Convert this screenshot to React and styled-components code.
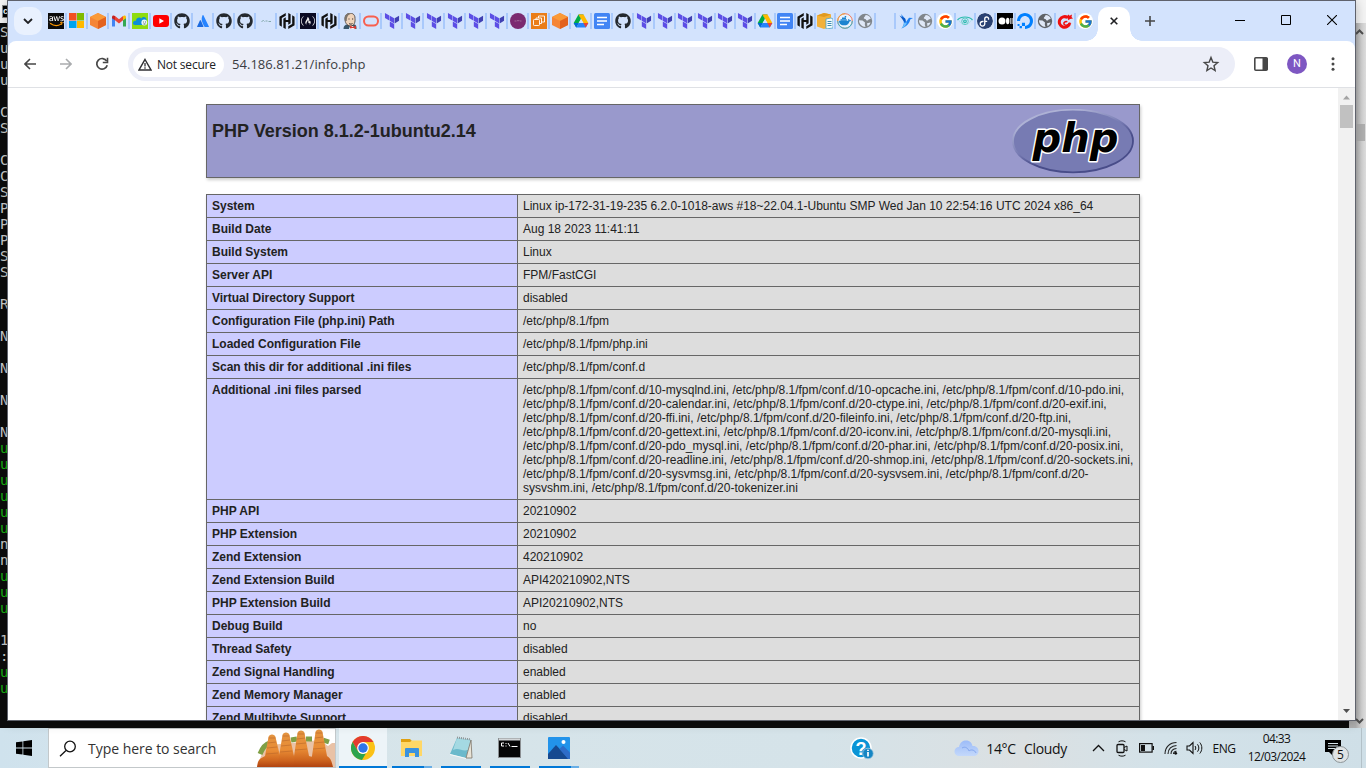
import React from "react";
import styled, { createGlobalStyle, css } from "styled-components";
import { FaGithub, FaAws } from "react-icons/fa";
import { FcGoogle } from "react-icons/fc";
import { SiHashicorp, SiFedora, SiDigitalocean, SiFreecodecamp } from "react-icons/si";

const Global = createGlobalStyle`
  * { box-sizing: border-box; }
  body { margin: 0; overflow: hidden; }
`;

const ui = `"Open Sans", "Noto Sans", sans-serif`;

const Desktop = styled.div`
  position: relative;
  width: 1366px;
  height: 768px;
  overflow: hidden;
  display: flex;
  flex-direction: column;
  font-family: ${ui};
`;

/* ---------- terminal behind the browser ---------- */
const Terminal = styled.div`
  height: 728px;
  display: flex;
  flex-direction: column;
  background: #0c0c0c;
`;
const TerminalTitle = styled.div`
  height: 23px;
  flex: none;
  background: #f4f4f4;
  display: flex;
  align-items: center;
`;
const TerminalIcon = styled.span`
  width: 10px;
  height: 13px;
  margin-left: 2px;
  border: 1px solid #888;
  background: #000;
  color: #fff;
  font: bold 9px/11px "Liberation Sans", sans-serif;
`;
const TerminalBody = styled.div`
  flex: 1;
  display: flex;
  justify-content: space-between;
`;
const Lines = styled.div`
  padding-top: 1px;
  font: 14px/16px "DejaVu Sans Mono", monospace;
`;
const Line = styled.div`
  height: 16px;
  color: ${(p) => (p.$green ? "#16b610" : "#cccccc")};
`;
const TerminalScroll = styled.div`
  width: 17px;
  background: linear-gradient(90deg, #b0b0b0 0 40%, #d2d2d2 75%, #dedede);
  display: flex;
  flex-direction: column;
  justify-content: space-between;
  padding: 5px 0 3px;
  align-items: flex-end;
`;
const TerminalThumb = styled.div`
  width: 10px;
  height: 17px;
  margin: 88px 1px auto 0;
  background: #b0b0b0;
`;

/* ---------- browser window ---------- */
const Window = styled.div`
  position: absolute;
  left: 7px;
  top: 0;
  width: 1349px;
  height: 721px;
  border: 1px solid #5f626c;
  display: flex;
  flex-direction: column;
  background: #fff;
  box-shadow: 0 2px 10px rgba(0, 0, 0, 0.25);
`;
const TabStrip = styled.div`
  height: 40px;
  flex: none;
  display: flex;
  background: #d3e3fd;
  padding-left: 6px;
`;
const TabSearch = styled.div`
  width: 28px;
  height: 28px;
  margin: 6px 6px 0 0;
  border-radius: 10px;
  background: #e9f1fe;
  display: grid;
  place-items: center;
`;
const Tab = styled.div`
  width: ${(p) => p.$w}px;
  height: 16px;
  margin-top: 12px;
  display: flex;
  justify-content: space-between;
  flex: none;
  &::after {
    content: "";
    width: 2px;
    margin-right: ${(p) => (p.$w === 21 ? 2 : 1)}px;
    background: ${(p) => (p.$plain ? "transparent" : "#a9c9fb")};
  }
  svg { display: block; }
`;
const Tile = styled.span`
  width: 16px;
  height: 16px;
  display: grid;
  place-items: center;
  background: ${(p) => p.$bg || "transparent"};
  border-radius: ${(p) => p.$r || 0}px;
  color: ${(p) => p.$c || "#24292f"};
  overflow: hidden;
`;
const ActiveTab = styled.div`
  position: relative;
  width: 32px;
  height: 34px;
  margin: 6px 0 0 1px;
  border-radius: 10px 10px 0 0;
  background: #fff;
  display: grid;
  place-items: center;
  padding-bottom: 6px;
  &::before, &::after {
    content: "";
    position: absolute;
    bottom: 0;
    width: 12px;
    height: 12px;
  }
  &::before { left: -12px; background: radial-gradient(circle at 0 0, transparent 11.5px, #fff 12px); }
  &::after { right: -12px; background: radial-gradient(circle at 100% 0, transparent 11.5px, #fff 12px); }
`;
const NewTab = styled.div`
  width: 40px;
  display: grid;
  place-items: center;
`;
const WindowButtons = styled.div`
  margin-left: auto;
  display: flex;
  height: 38px;
`;
const WindowButton = styled.div`
  width: 46px;
  display: grid;
  place-items: center;
`;
const ToolbarBack = styled.div`
  background: #d3e3fd;
  flex: none;
`;
const Toolbar = styled.div`
  height: 47px;
  border-bottom: 1px solid #dfe1e5;
  border-radius: 8px 8px 0 0;
  background: #fff;
  display: flex;
  align-items: center;
  padding-left: 4px;
`;
const NavButton = styled.div`
  width: 36px;
  display: grid;
  place-items: center;
`;
const Omnibox = styled.div`
  width: 1107px;
  height: 34px;
  margin: 0 8px;
  padding: 0 15px 0 5px;
  border-radius: 17px;
  background: #eceef8;
  display: flex;
  align-items: center;
`;
const SecurityChip = styled.div`
  width: 91px;
  height: 25px;
  border-radius: 13px;
  background: #fff;
  padding-left: 5px;
  display: flex;
  align-items: center;
  gap: 5px;
  color: #202124;
  font-size: 12px;
  letter-spacing: -0.2px;
  white-space: nowrap;
`;
const Url = styled.div`
  margin: 0 auto 0 8px;
  font-size: 13px;
  letter-spacing: 0.04px;
  color: #3a3c42;
`;
const Avatar = styled.div`
  width: 20px;
  height: 20px;
  border-radius: 50%;
  background: #7e57c2;
  color: #fff;
  font: 11px/20px Roboto, sans-serif;
  text-align: center;
`;
const Viewport = styled.div`
  flex: 1;
  min-height: 0;
  display: flex;
  overflow: hidden;
`;
const Page = styled.div`
  width: 1330px;
  padding-top: 16px;
  font-family: "Liberation Sans", Arial, sans-serif;
  color: #222;
`;
const Scrollbar = styled.div`
  width: 17px;
  background: #f1f1f1;
  display: flex;
  flex-direction: column;
  align-items: center;
  padding: 7px 0;
`;
const Thumb = styled.div`
  width: 13px;
  height: 23px;
  margin: 5px 0 auto;
  background: #c1c1c1;
`;

/* ---------- phpinfo document ---------- */
const Banner = styled.div`
  width: 934px;
  height: 74px;
  margin: 0 auto 16px;
  padding: 4px 5px;
  border: 1px solid #666;
  background: #9999cc;
  box-shadow: 1px 2px 3px #ccc;
  display: flex;
  justify-content: space-between;
`;
const Heading = styled.h1`
  margin: 12px 0 0;
  font-size: 18px;
  line-height: 21px;
  font-weight: bold;
`;
const Info = styled.table`
  width: 934px;
  margin: 0 auto;
  border-collapse: collapse;
  table-layout: fixed;
  box-shadow: 1px 2px 3px #ccc;
  font-size: 12px;
  line-height: 14px;
`;
const cell = css`
  border: 1px solid #666;
  padding: 4px 5px;
  vertical-align: top;
  white-space: nowrap;
`;
const Key = styled.td`
  ${cell}
  width: 311px;
  background: #ccccff;
  font-weight: bold;
`;
const Value = styled.td`
  ${cell}
  background: #dddddd;
`;

/* ---------- taskbar ---------- */
const Taskbar = styled.div`
  height: 40px;
  display: flex;
  background: linear-gradient(90deg, #cfe2ed, #d7e5ea 15%, #d5e3e9 60%, #dbe0e2 75%, #d3e2e9 85%, #cfdfe7);
  color: #111;
`;
const Start = styled.div`
  width: 48px;
  display: grid;
  place-items: center;
`;
const Search = styled.div`
  width: 288px;
  height: 40px;
  border: 1px solid #c3c8ca;
  background: #fff;
  display: flex;
  align-items: center;
  padding-left: 10px;
  color: #333;
  font-size: 14px;
  & > svg:last-child { margin-left: auto; }
`;
const SearchText = styled.span`
  margin-left: 11px;
  letter-spacing: -0.03px;
  white-space: nowrap;
`;
const Apps = styled.div`
  display: flex;
  gap: 9px;
  margin-left: 3px;
`;
const TaskButton = styled.div`
  width: ${(p) => (p.$active ? 48 : 40)}px;
  margin-right: ${(p) => (p.$active ? -4 : 0)}px;
  background: ${(p) => (p.$active ? "#edf4f8" : "transparent")};
  display: flex;
  flex-direction: column;
  align-items: center;
  justify-content: space-between;
`;
const AppIcon = styled.div`
  height: 38px;
  padding-top: 1px;
  display: grid;
  place-items: center;
`;
const Running = styled.div`
  align-self: stretch;
  height: 2px;
  background: ${(p) => (p.$multi ? "linear-gradient(90deg, #0078d7 80%, #68aee6 80%)" : "#0078d7")};
`;
const Tray = styled.div`
  margin-left: auto;
  padding-right: 4px;
  display: flex;
  align-items: center;
`;
const TrayItem = styled.div`
  width: ${(p) => p.$w}px;
  margin-right: ${(p) => p.$after || 0}px;
  display: flex;
  justify-content: center;
  font-size: ${(p) => p.$size || 13}px;
  letter-spacing: ${(p) => p.$s || 0}px;
  white-space: nowrap;
`;
const Clock = styled.div`
  width: 79px;
  font-size: 12px;
  line-height: 18px;
  letter-spacing: -0.6px;
  text-align: center;
`;
const Notifications = styled.div`
  position: relative;
  width: 43px;
  height: 40px;
  margin-left: 3px;
  padding: 12px 0 0 6px;
  border-right: 1px solid #b3c1c8;
`;
const Badge = styled.div`
  position: absolute;
  left: 13px;
  top: 18px;
  width: 17px;
  height: 17px;
  border: 1px solid #8d9598;
  border-radius: 50%;
  background: #dfe3e4;
  font-size: 12px;
  line-height: 15px;
  text-align: center;
`;

/* ---------- favicons ---------- */
const Svg = ({ s = 16, v = 16, children, ...rest }) => (
  <svg width={s} height={s} viewBox={`0 0 ${v} ${v}`} fill="none" {...rest}>{children}</svg>
);
const Aws = () => (
  <Tile $bg="#0b0b0b" $c="#fff">
    <Svg>
      <FaAws x=".5" y="0" width="15" height="15" color="#fff" />
      <path d="M0 10.800c3.600 3 11 3 16 0" stroke="#0b0b0b" strokeWidth="4.200" />
      <path d="M2 10.300c3.600 2.600 8 2.700 11 .8M12 9.800l2-.2-.5 2" stroke="#f90" strokeWidth="1.100" />
    </Svg>
  </Tile>
);
const Microsoft = () => (
  <Svg><path d="M0 0h7.500v7.500H0z" fill="#f25022" /><path d="M8 0h7v7.500H8z" fill="#7fba00" /><path d="M0 8h7.500v7H0z" fill="#00a4ef" /><path d="M8 8h7v7H8z" fill="#ffb900" /></Svg>
);
const Cube = () => (
  <Svg><path d="M8 0l8 4v8l-8 4-8-4V4z" fill="#f58536" /><path d="M8 0l8 4-8 4-8-4z" fill="#fa9a38" /><path d="M8 8l8-4v8l-8 4z" fill="#e3621e" /></Svg>
);
const Gmail = () => (
  <Svg>
    <path d="M1 4v9.500h3V7z" fill="#4285f4" /><path d="M15 4v9.500h-3V7z" fill="#34a853" />
    <path d="M4 3l4 3.300L12 3v4.200l-4 3.200-4-3.200z" fill="#ea4335" />
    <path d="M12 3c1.500-1 3-.5 3 1v1.200l-3 2z" fill="#fbbc04" /><path d="M4 3C2.500 2 1 2.500 1 4v1.200l3 2z" fill="#c5221f" />
  </Svg>
);
const CloudFace = () => (
  <Svg>
    <path d="M0 0h16v16H0z" fill="#8edc10" />
    <path d="M1 10c0-2 2-2.500 3-2.300 0-3 4-4 5.500-2.200C11 3 14.500 4 14.500 7c1 4-1 5-3 5H3c-1.500 0-2-1-2-2z" fill="#0c8ed8" />
    <circle cx="12.300" cy="9.500" r="2.900" fill="#e9f6f8" /><path d="M11 9h.800M13 9h1M11.500 11h2" stroke="#39474c" strokeWidth=".8" />
  </Svg>
);
const YouTube = () => (
  <Svg><rect y="2" width="16" height="12" rx="3" fill="red" /><path d="M6.300 5.300v5.400L11 8z" fill="#fff" /></Svg>
);
const GitHub = () => <FaGithub size={16} color="#24292f" />;
const Atlassian = () => (
  <Svg><path d="M5 7.300c.3-.3.700-.2.900.2l2.600 6c.1.300 0 .5-.4.500H2.500c-.4 0-.5-.3-.4-.6z" fill="#1c6be0" /><path d="M7.600 2.300c.2-.4.600-.4.800 0l5.500 11.100c.1.300 0 .6-.4.600H10c-.4 0-.6-.1-.7-.4-1.300-3-4-6.500-1.700-11.300z" fill="#2684ff" /></Svg>
);
const Faint = () => (
  <Svg><path d="M3.500 8.500l2-1 1 1M7.500 8h2M10.500 8.500H13" stroke="#83a9ac" /></Svg>
);
const Hashi = () => <SiHashicorp size={16} color="#111" />;
const FreeCode = () => <Tile $bg="#0a0a23"><SiFreecodecamp size={14} color="#eee" /></Tile>;
const Jenkins = () => (
  <Svg>
    <path d="M1.500 16c0-3 1.500-4.500 4-4.500h6c3 0 3 2 3 4.500z" fill="#39576b" />
    <path d="M3 6c0-8 10.500-7.500 10-.5.4 3-.5 7.500-4.500 7.500S3 9 3 6z" fill="#efd4bb" stroke="#3c3330" strokeWidth=".8" />
    <path d="M3 8C1 1.500 6-.5 8.500 1 5.500 2 5 4 4.700 8z" fill="#7c756c" />
    <path d="M6.500 6h1M10 6h1.200M7 10.500c1 1 3 .6 3.500 0" stroke="#3c3330" />
    <path d="M7 16l1-3h3l2 3z" fill="#fff" /><path d="M8 12.500l3 1.500 3-1.500V16l-3-1-3 .5z" fill="#d33833" />
  </Svg>
);
const Oracle = () => (
  <Svg><rect x="1" y="3.500" width="14" height="9" rx="4.500" stroke="#f8604f" strokeWidth="2" /></Svg>
);
const Terraform = () => (
  <Svg v={24}>
    <path d="M1.440 0v7.575l6.561 3.790V3.787zM8.720 4.230v7.575l6.561 3.787V8.018zM8.720 12.635v7.575L15.280 24v-7.578z" fill="#5c4ee5" />
    <path d="M22.560 4.227l-6.561 3.791v7.574l6.560-3.787z" fill="#4040b2" />
  </Svg>
);
const Plum = () => (
  <Svg><circle cx="8" cy="8" r="8" fill="#7b2a70" /><path d="M4.500 8h2M7 7.700h2.500M10 8h1.500" stroke="#a777a0" strokeWidth=".8" /></Svg>
);
const Ec2 = () => (
  <Svg><path d="M0 0h16v16H0z" fill="#ea7d18" /><rect x="2.500" y="6.500" width="6" height="6" rx=".8" stroke="#fff" strokeWidth=".9" /><path d="M5 6.500V5h5.500v5.500h-2M7.500 5V3h6v6h-3" stroke="#fff" strokeWidth=".9" /></Svg>
);
const Drive = () => (
  <Svg>
    <path d="M5.500 1.500h5L8 6z" fill="#188038" /><path d="M5.500 1.500L8 6 3.200 14.500.7 10z" fill="#00ac47" />
    <path d="M10.500 1.500L15.300 10h-5L5.500 1.500z" fill="#ffba00" /><path d="M.700 10l2.500 4.500L5.700 10z" fill="#0066da" />
    <path d="M3.200 14.500L5.700 10h9.600l-2.500 4.500z" fill="#2684fc" /><path d="M10.300 10h5l-2.500 4.500z" fill="#ea4335" />
    <path d="M8 6l2.400 4H5.600z" fill="#d3e3fd" />
  </Svg>
);
const Docs = () => (
  <Svg><rect width="16" height="16" rx="1.500" fill="#4285f4" /><path d="M3 4.500h10M3 8h10M3 11.500h7" stroke="#fff" strokeWidth="1.700" /></Svg>
);
const Box = () => (
  <Svg><path d="M0 2.500L7 0l7 1.500V13l-7 3-7-2.500z" fill="#f2b13a" /><path d="M0 2.500L7 4l7-2.500L7 0z" fill="#e09a20" /><path d="M9 6l5-1 2 1v9l-7 1z" fill="#f3fafc" stroke="#4aa3c6" strokeWidth=".8" /><path d="M10.500 8.500h4M10.500 10.500h4M10.500 12.500h4" stroke="#3d8cb4" /></Svg>
);
const Docker = () => (
  <Svg>
    <circle cx="8" cy="8" r="7.300" fill="#e8f3fd" stroke="#f0795c" />
    <path d="M8 .700a7.300 7.300 0 0 0-7.300 7.300" stroke="#eba13e" /><path d="M.700 8A7.300 7.300 0 0 0 8 15.300 7.300 7.300 0 0 0 15.300 8" stroke="#38b6c9" />
    <path d="M2 7.800h9.200c.3-.8.200-1.300-.1-1.800.9-.2 1.500.5 1.600 1.200.6-.1 1 0 1.500.300-.4.700-1 .9-1.700.9C11.700 11 10 12.300 7 12.300c-3.500 0-5-2-5-4.500z" fill="#1d84d0" />
    <path d="M3.500 7h6.300M5 5.300h4M7.700 3.600h1.500" stroke="#1d84d0" strokeWidth="1.400" />
  </Svg>
);
const Globe = ({ c = "#80868b" }) => (
  <Svg><circle cx="8" cy="8" r="7.200" fill={c} /><path d="M2 7.200l3.500.2 2.500 2-.2 2 .7 2.500c-3.500 0-6.500-2.900-6.500-6.700z" fill="#dfe8f7" /><path d="M8.500 2c2.500 0 4.500 1.500 5.300 3.500-.8 1.200-2 .5-2.600 1.500-.8 1.300-2.200.2-2.400-.8l-2-.700C6.500 3.700 8.700 3.700 8.500 2z" fill="#dfe8f7" /><path d="M10 10.200l3.500-.7c-.4 1.700-1.500 3-3 3.800z" fill="#dfe8f7" /></Svg>
);
const Bird = () => (
  <Svg><path d="M4 1l4.500 5L9 9l3-4.200 4 .2-2.800 1.500C12.500 10.500 9 14 4.500 15.500 6.500 13 7 11 6.800 9z" fill="#2183f3" /><path d="M2.500 2.500l5 6.500 1.200-.5L8 5.500z" fill="#0b57c2" /><path d="M4.500 15.500C6 13.500 7 12 7 10l3-.5C9 12.500 7 14.500 4.500 15.500z" fill="#6cc0fb" /></Svg>
);
const GoogleIcon = () => <Tile $bg="#fff" $r={8}><FcGoogle size={15} /></Tile>;
const Eye = () => (
  <Svg><path d="M.500 7C4 3 12 3 15.500 7" stroke="#2bbbae" strokeWidth="1.200" /><circle cx="8" cy="8.300" r="3.300" stroke="#5fcac3" /><circle cx="8" cy="8.300" r="1.300" stroke="#2bbbae" strokeWidth="1.200" /><path d="M2 7.500c1.200 2 2 3 4 4M14 7.500c-1.200 2-2 3-4 4" stroke="#a0dfe0" strokeWidth=".700" /></Svg>
);
const Fedora = () => <Tile $bg="#fff" $r={8}><SiFedora size={16} color="#294172" /></Tile>;
const Medium = () => (
  <Tile $bg="#000"><Svg><circle cx="5" cy="8" r="3.500" fill="#fff" /><ellipse cx="10.700" cy="8" rx="1.700" ry="3.300" fill="#fff" /><path d="M13.700 5v6M15.200 5v6" stroke="#fff" strokeWidth=".8" /></Svg></Tile>
);
const DigitalOcean = () => <SiDigitalocean size={16} color="#0080ff" />;
const RedSwirl = () => (
  <Svg>
    <path d="M10.500 4.500A5.300 5.300 0 1 0 12.800 10" stroke="#ee1010" strokeWidth="3" />
    <path d="M12.800 9.500c-.2 2.500-4.800 3.700-5.800 1.700-.7-1.700 1.300-3.200 3.300-2.400" stroke="#ee1010" strokeWidth="1.500" />
    <path d="M9.500 3.500l2.200-2 .8 1.300L15 1.500l-.5 2.500 1.500 1.500-3 .5-1.500 1.200z" fill="#ee1010" />
  </Svg>
);
const DarkGlobe = () => <Globe c="#5f6368" />;
const Blank = () => <Tile />;

const tabs = [
  Aws, Microsoft, Cube, Gmail, CloudFace, YouTube, GitHub, Atlassian, GitHub, GitHub, Faint, Hashi,
  FreeCode, Hashi, Jenkins, Oracle, Terraform, Terraform, Terraform, Terraform, Terraform, Terraform,
  Plum, Ec2, Cube, Drive, Docs, GitHub, Terraform, Terraform, Terraform, Terraform, Terraform, Terraform,
  Drive, Docs, Hashi, Box, Docker, Globe, Blank, Bird, Globe, GoogleIcon, Eye, Fedora, Medium,
  DigitalOcean, DarkGlobe, RedSwirl, GoogleIcon,
];

/* one character per console line; "g" is a green prompt */
const terminalText = "Suuu CS CCSPPPSS R N N N NggggggnngggX1:gg";

const ini = [
  "/etc/php/8.1/fpm/conf.d/10-mysqlnd.ini, /etc/php/8.1/fpm/conf.d/10-opcache.ini, /etc/php/8.1/fpm/conf.d/10-pdo.ini,",
  "/etc/php/8.1/fpm/conf.d/20-calendar.ini, /etc/php/8.1/fpm/conf.d/20-ctype.ini, /etc/php/8.1/fpm/conf.d/20-exif.ini,",
  "/etc/php/8.1/fpm/conf.d/20-ffi.ini, /etc/php/8.1/fpm/conf.d/20-fileinfo.ini, /etc/php/8.1/fpm/conf.d/20-ftp.ini,",
  "/etc/php/8.1/fpm/conf.d/20-gettext.ini, /etc/php/8.1/fpm/conf.d/20-iconv.ini, /etc/php/8.1/fpm/conf.d/20-mysqli.ini,",
  "/etc/php/8.1/fpm/conf.d/20-pdo_mysql.ini, /etc/php/8.1/fpm/conf.d/20-phar.ini, /etc/php/8.1/fpm/conf.d/20-posix.ini,",
  "/etc/php/8.1/fpm/conf.d/20-readline.ini, /etc/php/8.1/fpm/conf.d/20-shmop.ini, /etc/php/8.1/fpm/conf.d/20-sockets.ini,",
  "/etc/php/8.1/fpm/conf.d/20-sysvmsg.ini, /etc/php/8.1/fpm/conf.d/20-sysvsem.ini, /etc/php/8.1/fpm/conf.d/20-",
  "sysvshm.ini, /etc/php/8.1/fpm/conf.d/20-tokenizer.ini",
];
const rows = [
  ["System", ["Linux ip-172-31-19-235 6.2.0-1018-aws #18~22.04.1-Ubuntu SMP Wed Jan 10 22:54:16 UTC 2024 x86_64"]],
  ["Build Date", ["Aug 18 2023 11:41:11"]],
  ["Build System", ["Linux"]],
  ["Server API", ["FPM/FastCGI"]],
  ["Virtual Directory Support", ["disabled"]],
  ["Configuration File (php.ini) Path", ["/etc/php/8.1/fpm"]],
  ["Loaded Configuration File", ["/etc/php/8.1/fpm/php.ini"]],
  ["Scan this dir for additional .ini files", ["/etc/php/8.1/fpm/conf.d"]],
  ["Additional .ini files parsed", ini],
  ["PHP API", ["20210902"]],
  ["PHP Extension", ["20210902"]],
  ["Zend Extension", ["420210902"]],
  ["Zend Extension Build", ["API420210902,NTS"]],
  ["PHP Extension Build", ["API20210902,NTS"]],
  ["Debug Build", ["no"]],
  ["Thread Safety", ["disabled"]],
  ["Zend Signal Handling", ["enabled"]],
  ["Zend Memory Manager", ["enabled"]],
  ["Zend Multibyte Support", ["disabled"]],
];

const PhpLogo = () => (
  <svg width="122" height="65" viewBox="0 0 122 65">
    <defs>
      <linearGradient id="rim" x1=".2" y1="0" x2=".8" y2="1">
        <stop offset=".15" stopColor="#aeb2d5" /><stop offset=".45" stopColor="#777bb3" /><stop offset=".65" stopColor="#484c89" />
      </linearGradient>
    </defs>
    <ellipse cx="61" cy="32" rx="60" ry="31.300" fill="#777bb3" stroke="url(#rim)" strokeWidth="1.800" />
    <text x="20.500" y="43" textLength="86" lengthAdjust="spacingAndGlyphs" fontFamily="DejaVu Sans" fontWeight="bold" fontStyle="italic" fontSize="41" fill="#000" stroke="#fff" strokeWidth="3" paintOrder="stroke" strokeLinejoin="round">php</text>
  </svg>
);

/* ---------- taskbar drawings ---------- */
const fingers = [
  { x: 17, y: 5, l: 2, r: 30 },
  { x: 31, y: 3, l: 22, r: 48 },
  { x: 46, y: 1, l: 38, r: 66 },
  { x: 64, y: 0, l: 54, r: 78 },
];
const Spires = () => (
  <svg width="80" height="38" viewBox="0 0 80 38">
    <defs>
      <linearGradient id="finger" x1="0" y1="0" x2="0" y2="1">
        <stop stopColor="#e39441" /><stop offset=".5" stopColor="#e98c35" /><stop offset=".8" stopColor="#cf661f" /><stop offset="1" stopColor="#b04310" />
      </linearGradient>
    </defs>
    <path d="M3 38c2-10 5-18 12-22l50-5 8 6 4-3h3v24z" fill="#e9c2a6" />
    <path d="M5 25c2-5 6-10 10-11M36 11l6-1M51 10l6 0M68 11l6 2" stroke="#7f9f45" strokeWidth="5" fill="none" />
    {fingers.map(({ x, y, l, r }) => (
      <g key={x}>
        <path
          d={`M${l} 38C${l + 1} 31 ${l + 2} 30 ${x - 7} 27L${x - 3.500} ${y + 3}C${x - 3} ${y - 0.500} ${x + 3} ${y - 0.500} ${x + 3.500} ${y + 3}L${x + 8} 27C${r - 2} 29 ${r - 1} 34 ${r} 38z`}
          fill="url(#finger)"
        />
        <path d={`M${x - 3.500} ${y + 4}h7M${x - 4} ${y + 9}l8-1M${x - 5} ${y + 14}l10-1M${x - 6} ${y + 20}l12-1`} stroke="#b9662a" strokeWidth=".6" fill="none" />
      </g>
    ))}
  </svg>
);
const Chrome = () => (
  <Svg s={24} v={24}>
    <circle cx="12" cy="12" r="12" fill="#fbc116" />
    <path d="M1.600 6A12 12 0 0 1 22.400 6H12l-5.200 9z" fill="#e33b2e" />
    <path d="M1.600 6l5.200 9a6 6 0 0 0 8.200 2.200L11 24A12 12 0 0 1 1.600 6z" fill="#2da44e" />
    <circle cx="12" cy="12" r="5.900" fill="#fff" /><circle cx="12" cy="12" r="4.700" fill="#2f75e8" />
  </Svg>
);
const Explorer = () => (
  <Svg s={22} v={22}><path d="M0 2h9l2 2v3H0z" fill="#e0a010" /><path d="M0 5h9l2-1.500h10V19H0z" fill="#ffd766" /><path d="M4 20v-8q0-1 1-1h12q1 0 1 1v8h-4v-4H8v4z" fill="#3b92de" /></Svg>
);
const Notepad = () => (
  <Svg s={24} v={24}><path d="M8 2l14 2-5 18L1 18z" fill="#6bb9cb" /><path d="M8 2l14 2-3 10c-6 2-9-3-15 0z" fill="#a4d9e2" /><path d="M22 4l1 18-6 0z" fill="#e9e4d7" stroke="#7c7467" strokeWidth=".8" /><path d="M8 1.500l14 2" stroke="#8d9496" strokeWidth="2" strokeDasharray="1 1" /><path d="M1 18.500l16 4" stroke="#f5f8f8" /></Svg>
);
const Cmd = () => (
  <Svg s={24} v={24}><rect x=".500" y="2.500" width="22" height="19" fill="#060606" stroke="#8b8f92" /><path d="M1 3.500h21" stroke="#d3d6d8" strokeWidth="2" /><path d="M6 7H3.500v3H6M8 7v1M8 9.500v1M10 7l2 3.500M13.500 10.500h6" stroke="#fff" /></Svg>
);
const Photos = () => (
  <Svg s={22} v={22}><rect width="22" height="22" rx="1" fill="#2293ea" /><path d="M0 17L8 8l13 14H0z" fill="#164990" /><path d="M11.500 12L15 8.500l7 7V22H20z" fill="#2e6cc8" /><circle cx="15.500" cy="5" r="2" fill="#fff" /></Svg>
);
const Help = () => (
  <svg width="24" height="24" viewBox="0 0 24 24">
    <circle cx="11" cy="12" r="10" fill="#0a94d6" stroke="#fff" strokeWidth="1.500" />
    <text x="5.500" y="18.500" fontFamily="Liberation Sans" fontWeight="bold" fontSize="18" fill="#fff">?</text>
    <circle cx="18" cy="17.500" r="5.300" fill="#1686c4" stroke="#a9cde0" strokeWidth=".8" /><path d="M18 16v4.500M18 13.800v1.300" stroke="#fff" strokeWidth="1.700" />
  </svg>
);
const Cloud = () => (
  <svg width="25" height="17" viewBox="0 0 25 17">
    <defs><linearGradient id="cl" x1="0" y1="0" x2="0" y2="1"><stop stopColor="#9dbcf8" /><stop offset="1" stopColor="#c3d8fb" /></linearGradient></defs>
    <path d="M5 16a4.500 4.500 0 0 1 0-9C6 2 9 .500 12 .500c4 0 6 2.500 6.500 5.500C22 5.500 24.500 8 24.500 11s-2 5-5 5z" fill="url(#cl)" />
    <path d="M8 8c3-2 6 0 7 3 2-2 6-1 7 2" stroke="#86a9f0" fill="none" />
  </svg>
);

export default function App() {
  return (
    <Desktop>
      <Global />
      <Terminal>
        <TerminalTitle><TerminalIcon>c</TerminalIcon></TerminalTitle>
        <TerminalBody>
          <Lines>
            {[...terminalText].map((ch, i) => (
              <Line key={i} $green={ch === "g"}>{ch === "g" ? "u" : ch === "X" ? " " : ch}</Line>
            ))}
          </Lines>
          <TerminalScroll>
            <svg width="11" height="8"><path d="M1 6l3.500-3.500L8 6" stroke="#505050" strokeWidth="2" fill="none" /></svg>
            <TerminalThumb />
            <svg width="11" height="8"><path d="M1 2l3.500 3.500L8 2" stroke="#505050" strokeWidth="2" fill="none" /></svg>
          </TerminalScroll>
        </TerminalBody>
      </Terminal>

      <Window>
        <TabStrip>
          <TabSearch><svg width="10" height="6"><path d="M1 1l4 4 4-4" stroke="#202124" strokeWidth="1.800" fill="none" /></svg></TabSearch>
          {tabs.map((Icon, i) => (
            <Tab key={i} $w={i < 29 ? 21 : 20} $plain={i === tabs.length - 1}><Icon /></Tab>
          ))}
          <ActiveTab><svg width="8" height="8"><path d="M.700.700l6.600 6.600M7.300.700L.700 7.300" stroke="#202124" strokeWidth="1.600" /></svg></ActiveTab>
          <NewTab><svg width="12" height="12"><path d="M6 1v10M1 6h10" stroke="#474747" strokeWidth="1.600" /></svg></NewTab>
          <WindowButtons>
            <WindowButton><svg width="10" height="10"><path d="M0 5.500h10" stroke="#000" /></svg></WindowButton>
            <WindowButton><svg width="10" height="10"><path d="M.500.500h9v9h-9z" stroke="#000" fill="none" /></svg></WindowButton>
            <WindowButton><svg width="10" height="10"><path d="M0 0l10 10M10 0L0 10" stroke="#000" strokeWidth="1.100" /></svg></WindowButton>
          </WindowButtons>
        </TabStrip>
        <ToolbarBack>
          <Toolbar>
            <NavButton><svg width="12" height="12"><path d="M12 6H1.500M6 1L1 6l5 5" stroke="#474747" strokeWidth="1.600" fill="none" /></svg></NavButton>
            <NavButton><svg width="12" height="12"><path d="M0 6h10.500M6 1l5 5-5 5" stroke="#aaacae" strokeWidth="1.600" fill="none" /></svg></NavButton>
            <NavButton><svg width="14" height="14"><path d="M11.700 4.200A5.300 5.300 0 1 0 12.200 8.200" stroke="#474747" strokeWidth="1.700" fill="none" /><path d="M12.500.800v4.700H7.800" stroke="#474747" strokeWidth="1.600" fill="none" /></svg></NavButton>
            <Omnibox>
              <SecurityChip>
                <svg width="14" height="13"><path d="M7 1.500L13 12H1z" stroke="#303134" strokeWidth="1.500" fill="none" /><path d="M7 5v3.500M7 9.300v1.400" stroke="#303134" strokeWidth="1.300" /></svg>
                Not secure
              </SecurityChip>
              <Url>54.186.81.21/info.php</Url>
              <svg width="18" height="18" viewBox="0 0 18 18"><path d="M9 2.500l1.800 4.600 4.900.4-3.700 3.200 1.100 4.800L9 13l-4.100 2.500L6 10.700 2.300 7.500l4.900-.4z" stroke="#474747" strokeWidth="1.400" fill="none" /></svg>
            </Omnibox>
            <NavButton><svg width="14" height="14"><rect x=".800" y=".800" width="12.400" height="12.400" rx="1" stroke="#474747" strokeWidth="1.600" fill="none" /><path d="M8.500 1h5v12h-5z" fill="#474747" /></svg></NavButton>
            <NavButton><Avatar>N</Avatar></NavButton>
            <NavButton><svg width="4" height="14"><circle cx="2" cy="1.700" r="1.500" fill="#474747" /><circle cx="2" cy="7" r="1.500" fill="#474747" /><circle cx="2" cy="12.300" r="1.500" fill="#474747" /></svg></NavButton>
          </Toolbar>
        </ToolbarBack>
        <Viewport>
          <Page>
            <Banner>
              <Heading>PHP Version 8.1.2-1ubuntu2.14</Heading>
              <PhpLogo />
            </Banner>
            <Info>
              <tbody>
                {rows.map(([k, v]) => (
                  <tr key={k}>
                    <Key>{k}</Key>
                    <Value>{v.map((t) => <div key={t}>{t}</div>)}</Value>
                  </tr>
                ))}
              </tbody>
            </Info>
          </Page>
          <Scrollbar>
            <svg width="7" height="5"><path d="M0 4.500L3.500.500 7 4.500z" fill="#a3a3a3" /></svg>
            <Thumb />
            <svg width="7" height="4"><path d="M0 0h7L3.500 4z" fill="#505050" /></svg>
          </Scrollbar>
        </Viewport>
      </Window>

      <Taskbar>
        <Start><svg width="16" height="16"><path d="M0 2.300L6.500 1.400v6.200H0zM7.300 1.300L16 0v7.600H7.300zM0 8.400h6.500v6.200L0 13.700zM7.300 8.400H16V16l-8.700-1.300z" fill="#000" /></svg></Start>
        <Search>
          <svg width="18" height="17"><circle cx="11" cy="6.500" r="5.300" stroke="#111" strokeWidth="1.300" fill="none" /><path d="M7 10.500L1 16.300" stroke="#111" strokeWidth="1.300" /></svg>
          <SearchText>Type here to search</SearchText>
          <Spires />
        </Search>
        <Apps>
          <TaskButton $active><AppIcon><Chrome /></AppIcon><Running /></TaskButton>
          <TaskButton><AppIcon><Explorer /></AppIcon><Running $multi /></TaskButton>
          <TaskButton><AppIcon><Notepad /></AppIcon><Running /></TaskButton>
          <TaskButton><AppIcon><Cmd /></AppIcon><Running /></TaskButton>
          <TaskButton><AppIcon><Photos /></AppIcon><Running $multi /></TaskButton>
        </Apps>
        <Tray>
          <TrayItem $w={24} $after={80}><Help /></TrayItem>
          <TrayItem $w={25}><Cloud /></TrayItem>
          <TrayItem $w={44} $size={14} $s={-0.35}>14°C</TrayItem>
          <TrayItem $w={45} $size={14} $s={-0.3} $after={24}>Cloudy</TrayItem>
          <TrayItem $w={13} $after={11}><svg width="13" height="8"><path d="M1 7l5.500-5.500L12 7" stroke="#111" strokeWidth="1.300" fill="none" /></svg></TrayItem>
          <TrayItem $w={12}><svg width="12" height="17"><path d="M2.500 1.800c2-1.300 5-1.300 7 0M2.500 15.200c2 1.300 5 1.300 7 0" stroke="#111" fill="none" /><rect x="1" y="4.500" width="7" height="8" rx="1" stroke="#111" strokeWidth="1.300" fill="none" /><path d="M8 7.500l3-1.500v5L8 9.500" stroke="#111" fill="none" /></svg></TrayItem>
          <TrayItem $w={36}><svg width="15" height="10"><rect x=".600" y=".600" width="12.500" height="8.500" stroke="#111" strokeWidth="1.200" fill="none" /><path d="M2 2h4v6H2zM13.500 3h1.500v4h-1.500z" fill="#111" /></svg></TrayItem>
          <TrayItem $w={14}><svg width="14" height="14"><g stroke="#222" fill="none" strokeWidth="1.100"><path d="M1 13C1 6 6 1.500 12.500 1.500M4 13c0-5 3.500-8.300 8.500-8.500M7 13c0-3 2-5.300 5.500-5.500" /><path d="M9.500 13c0-1.500 1-2.600 3-2.700" /></g><circle cx="11.700" cy="12.300" r="1.400" fill="#111" /></svg></TrayItem>
          <TrayItem $w={33}><svg width="17" height="14"><path d="M1 5h2.500L7 1.500v11L3.500 9H1z" stroke="#111" fill="none" strokeWidth="1.100" /><path d="M9 5c1 1.300 1 2.800 0 4M11.500 3.300c1.800 2.300 1.800 5.200 0 7.400M13.800 1.500c2.700 3.300 2.700 7.700 0 11" stroke="#111" fill="none" /></svg></TrayItem>
          <TrayItem $w={26} $size={12} $s={-0.55}>ENG</TrayItem>
          <Clock>04:33<br />12/03/2024</Clock>
          <Notifications>
            <svg width="17" height="17"><path d="M0 0h16v12H8v4l-4-4H0z" fill="#000" /><path d="M3 3.500h10M3 6h10M3 8.500h7" stroke="#d5e3e9" /></svg>
            <Badge>5</Badge>
          </Notifications>
        </Tray>
      </Taskbar>
    </Desktop>
  );
}
